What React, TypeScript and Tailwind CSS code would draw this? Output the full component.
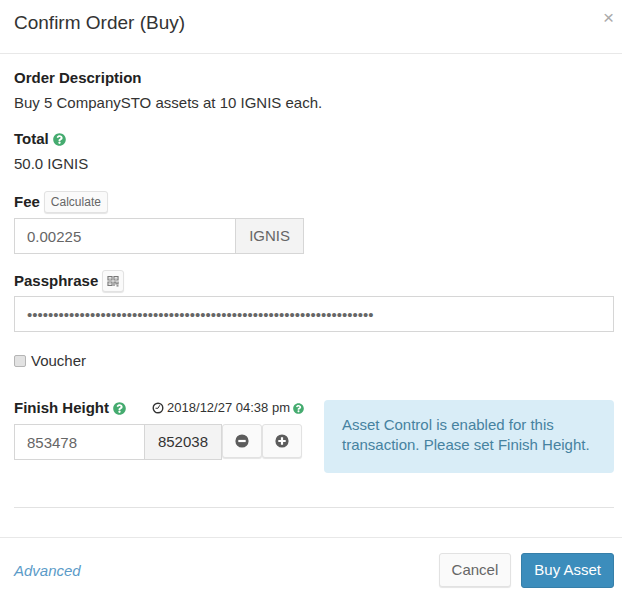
import React from "react";
import { FaQuestionCircle } from "react-icons/fa";

const passphrase = "x".repeat(66);

const smallButton =
    "flex items-center justify-center rounded-[3px] border border-[#e2e2e2] bg-[#fafafa] text-[#666] shadow-[0_1px_1px_#e4e4e4]";

const inputStyle =
    "h-9 min-w-0 border border-[#d6d6d6] bg-white px-3 text-[15px] text-[#666] outline-none";

interface HelpIconProps {
    size: number;
}

const HelpIcon: React.FC<HelpIconProps> = ({ size }) => (
    <FaQuestionCircle size={size} className="shrink-0 text-[#45ab6f]" />
);

const ClockIcon: React.FC = () => (
    <svg width="12" height="12" viewBox="0 0 24 24" fill="none" stroke="#333" className="shrink-0">
        <circle cx="12" cy="12" r="9.6" strokeWidth="2.8" />
        <path d="M15.5 6.5 L12 12.5 H7" strokeWidth="2" />
    </svg>
);

interface RoundIconProps {
    plus?: boolean;
}

const RoundIcon: React.FC<RoundIconProps> = ({ plus }) => (
    <svg width="14" height="14" viewBox="0 0 14 14">
        <circle cx="7" cy="7" r="6.6" fill="#5c5c5c" />
        <path d={plus ? "M3.3 7H10.7M7 3.3V10.7" : "M3.3 7H10.7"} stroke="#fff" strokeWidth="2.2" />
    </svg>
);

const QrIcon: React.FC = () => (
    <svg width="12" height="12" viewBox="0 0 12 12" fill="none" stroke="#777">
        <path d="M1 1.5H5V5H1ZM7 1.5H11V5H7ZM1 7H5V10.5H1Z" strokeWidth="1.2" />
        <path d="M7 11V7H9V9H11V6.5M9.5 10.8H11.5" strokeWidth="1.2" />
        <path d="M2.5 3.2H3.5M8.5 3.2H9.5M2.5 8.8H3.5" strokeWidth="1" />
    </svg>
);

interface InfoGroupProps {
    title: string;
    value: string;
    help?: boolean;
}

const InfoGroup: React.FC<InfoGroupProps> = ({ title, value, help }) => (
    <div className="mb-4">
        <div className="mb-[5px] flex h-5 items-center gap-1 font-bold text-[#222]">
            {title}
            {help && <HelpIcon size={13} />}
        </div>
        <p className="leading-5">{value}</p>
    </div>
);

export default function App() {
    return (
        <form
            className="bg-white font-['Liberation_Sans',Arial,sans-serif] text-[15px] leading-5 text-[#333]"
            onSubmit={(e) => e.preventDefault()}
        >
            {/* Header */}
            <header className="flex items-start justify-between border-b border-[#e8e8e8] pt-2 pr-2 pb-4 pl-[14px]">
                <h1 className="pt-px text-[19px] leading-7">Confirm Order (Buy)</h1>
                <button type="button" aria-label="Close" className="text-[19px] leading-5 text-[#aaa]">
                    ×
                </button>
            </header>

            {/* Order details */}
            <div className="pt-[14px] pr-2 pl-[14px]">
                <InfoGroup title="Order Description" value="Buy 5 CompanySTO assets at 10 IGNIS each." />
                <InfoGroup title="Total" value="50.0 IGNIS" help />

                <div className="mb-4 grid grid-cols-2 gap-5">
                    <div>
                        <div className="mb-1 flex h-6 items-center gap-1">
                            <label htmlFor="fee" className="font-bold text-[#222]">Fee</label>
                            <button type="button" className={`${smallButton} h-[22px] px-[6px] text-[12px]`}>
                                Calculate
                            </button>
                        </div>
                        <div className="flex">
                            <input id="fee" type="text" defaultValue="0.00225" className={`${inputStyle} flex-1`} />
                            <span className="-ml-px flex h-9 items-center border border-[#d6d6d6] bg-[#f3f3f3] px-[13px] text-[#666]">
                                IGNIS
                            </span>
                        </div>
                    </div>
                </div>

                <div className="mb-4">
                    <div className="mb-1 flex h-[22px] items-center gap-1">
                        <label htmlFor="passphrase" className="font-bold text-[#222]">Passphrase</label>
                        <button type="button" aria-label="Scan QR code" className={`${smallButton} h-[22px] w-[22px]`}>
                            <QrIcon />
                        </button>
                    </div>
                    <input
                        id="passphrase"
                        type="password"
                        defaultValue={passphrase}
                        className={`${inputStyle} w-full`}
                    />
                </div>

                <label className="flex h-[26px] items-center gap-[5px]">
                    <input
                        type="checkbox"
                        className="h-3 w-3 appearance-none rounded-[2px] border border-[#b5b5b5] bg-[#e2e2e2]"
                    />
                    Voucher
                </label>

                {/* Finish height and notice */}
                <div className="mt-[22px] grid grid-cols-2 items-start gap-5">
                    <div>
                        <div className="mb-1 flex h-6 items-center justify-between">
                            <div className="flex items-center gap-1">
                                <label htmlFor="finishHeight" className="font-bold text-[#222]">Finish Height</label>
                                <HelpIcon size={13} />
                            </div>
                            <div className="flex items-center gap-[3px] text-[13px]">
                                <ClockIcon />
                                2018/12/27 04:38 pm
                                <HelpIcon size={11} />
                            </div>
                        </div>
                        <div className="flex pr-0.5">
                            <input
                                id="finishHeight"
                                type="text"
                                defaultValue="853478"
                                className={`${inputStyle} flex-1`}
                            />
                            <span className="-ml-px flex h-9 items-center border border-[#d6d6d6] bg-[#f3f3f3] px-[13px]">
                                852038
                            </span>
                            <button type="button" aria-label="Decrease" className={`${smallButton} h-[34px] w-10`}>
                                <RoundIcon />
                            </button>
                            <button type="button" aria-label="Increase" className={`${smallButton} h-[34px] w-10`}>
                                <RoundIcon plus />
                            </button>
                        </div>
                    </div>
                    <div className="mt-1 rounded-[4px] bg-[#d9edf7] px-[18px] pt-[15px] pb-[18px] text-[#4682a0]">
                        Asset Control is enabled for this transaction. Please set Finish Height.
                    </div>
                </div>

                <hr className="mt-[34px] mb-[29px] border-[#e2e2e2]" />
            </div>

            {/* Footer */}
            <footer className="flex items-center justify-between border-t border-[#e8e8e8] pt-[15px] pr-2 pb-3 pl-[14px]">
                <a href="#advanced" className="text-[#5b9bc8] italic">Advanced</a>
                <div className="flex gap-[10px]">
                    <button type="button" className={`${smallButton} h-[34px] px-3`}>
                        Cancel
                    </button>
                    <button
                        type="submit"
                        className="h-[35px] rounded-[3px] border border-[#367fa9] bg-[#3c8dbc] px-3 pb-[2px] text-white"
                    >
                        Buy Asset
                    </button>
                </div>
            </footer>
        </form>
    );
}
